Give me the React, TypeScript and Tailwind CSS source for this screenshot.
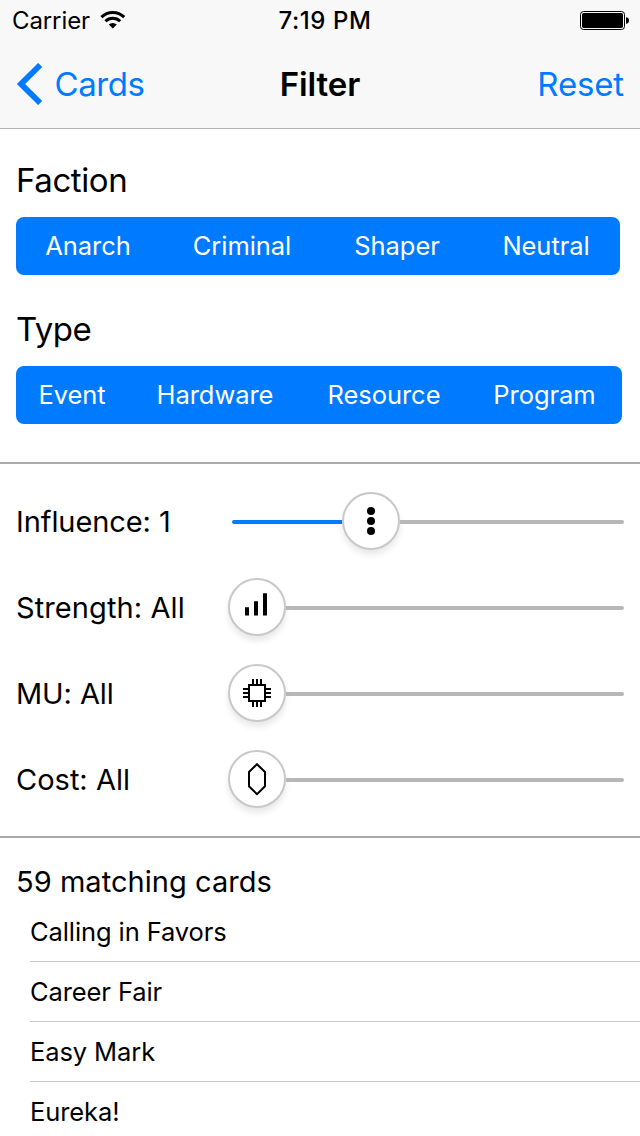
import React from "react";

type IconName = "influence" | "strength" | "memory" | "cost";

function ThumbIcon({ name }: { name: IconName }) {
  return (
    <svg width="54" height="54" viewBox="2 2 54 54" fill="none" className="block shrink-0">
      {name === "influence" && (
        <g fill="#000">
          <circle cx="29" cy="19" r="4" />
          <circle cx="29" cy="29" r="4" />
          <circle cx="29" cy="39" r="4" />
        </g>
      )}
      {name === "strength" && <path d="M17 29.3h4v8.3h-4zM26 23.3h4v14.3h-4zM35 15.3h4v22.3h-4z" fill="#000" />}
      {name === "memory" && (
        <path
          d="M21 21h16v16H21zM25 20v-5M29 20v-5M33 20v-5M25 38v5M29 38v5M33 38v5M20 25h-5M20 29h-5M20 33h-5M38 25h5M38 29h5M38 33h5"
          stroke="#000"
          strokeWidth="2"
        />
      )}
      {name === "cost" && <path d="M29 14.2l8 7.8v14.3l-8 7.9-8-7.9V22z" stroke="#000" strokeWidth="2" />}
    </svg>
  );
}

const factions = [
  { name: "Anarch", cell: "w-[144px]" },
  { name: "Criminal", cell: "w-[164px]" },
  { name: "Shaper", cell: "w-[146px]" },
  { name: "Neutral", cell: "w-[150px] pl-0.5" },
];

const types = [
  { name: "Event", cell: "w-[112px]" },
  { name: "Hardware", cell: "w-[174px]" },
  { name: "Resource", cell: "w-[164px]" },
  { name: "Program", cell: "w-[156px] pl-px" },
];

function Segments({ items }: { items: { name: string; cell: string }[] }) {
  return (
    <div className="flex h-[58px] w-fit overflow-hidden rounded-lg bg-[#007aff] text-[25.5px] tracking-[-0.05px] text-white">
      {items.map((item) => (
        <button key={item.name} className={`flex items-center justify-center ${item.cell}`}>
          {item.name}
        </button>
      ))}
    </div>
  );
}

const sliders: { label: string; icon: IconName; fill: string; tracking: string }[] = [
  { label: "Influence: 1", icon: "influence", fill: "w-[110px]", tracking: "tracking-[-0.08px]" },
  { label: "Strength: All", icon: "strength", fill: "w-0", tracking: "tracking-[0.1px]" },
  { label: "MU: All", icon: "memory", fill: "w-0", tracking: "tracking-[-0.1px]" },
  { label: "Cost: All", icon: "cost", fill: "w-0", tracking: "tracking-normal" },
];

const cards = ["Calling in Favors", "Career Fair", "Easy Mark", "Eureka!"];

export default function App() {
  return (
    <div className="flex h-[1136px] w-[640px] flex-col overflow-hidden bg-white font-['Inter','Liberation_Sans',sans-serif] text-black">
      <header className="h-[129px] shrink-0 border-b border-[#b2b2b2] bg-[#f8f8f8]">
        <div className="grid h-10 grid-cols-3 items-center pt-px text-[24px] leading-10">
          <div className="flex items-center pl-3">
            <span className="tracking-[-0.1px]">Carrier</span>
            <svg width="26" height="20" viewBox="0 0 26 20" className="mb-0.5 ml-[10px] block" fill="none" stroke="#000" strokeWidth="3">
              <path d="M1.4 7.1a16.2 16.2 0 0 1 22.8 0" />
              <path d="M5.4 11.2a10.5 10.5 0 0 1 14.8 0" />
              <path d="M12.8 18.6l-4-4.1a5.9 5.9 0 0 1 8 0z" fill="#000" stroke="none" />
            </svg>
          </div>
          <div className="pl-[10px] text-center font-medium tracking-[0.6px]">7:19 PM</div>
          <div className="flex justify-end pb-0.5 pr-[11px]">
            <svg width="50" height="20" viewBox="0 0 50 20" className="block">
              <rect x="1.5" y="1.5" width="44" height="18" rx="3" fill="none" stroke="#000" />
              <rect x="3" y="3" width="41" height="15" rx="1.8" />
              <path d="M47 7.2c4 0 4 6.6 0 6.6z" />
            </svg>
          </div>
        </div>
        <nav className="grid h-[88px] grid-cols-3 items-center pt-0.5 text-[33px]">
          <button className="flex items-center pl-4 text-[#007aff]">
            <svg width="27" height="42" viewBox="0 0 27 42" fill="none" stroke="#007aff" strokeWidth="5.8" className="mb-0.5 block shrink-0">
              <path d="M24.2 2L5 21l19.2 19" />
            </svg>
            <span className="ml-[11.5px] tracking-[-0.4px]">Cards</span>
          </button>
          <h1 className="text-center font-semibold tracking-[-0.1px]">Filter</h1>
          <button className="pr-4 text-right tracking-[-0.15px] text-[#007aff]">Reset</button>
        </nav>
      </header>

      <section className="h-[335px] shrink-0 border-b-2 border-[#a9a9a9] pl-4 pt-[31px]">
        <h2 className="mb-[17px] text-[33px] leading-[40px] tracking-[-0.4px]">Faction</h2>
        <Segments items={factions} />
        <h2 className="mb-[17px] mt-[34px] text-[33px] leading-[40px] tracking-[-0.5px]">Type</h2>
        <Segments items={types} />
      </section>

      <section className="flex h-[374px] shrink-0 flex-col gap-7 border-b-2 border-[#a9a9a9] pt-7">
        {sliders.map((s) => (
          <div key={s.label} className="flex h-[58px] items-center pl-4 pr-4">
            <span className={`w-[212px] shrink-0 pt-px text-[29px] ${s.tracking}`}>{s.label}</span>
            <div className="flex grow items-center">
              {s.fill !== "w-0" && <div className={`ml-1 mt-0.5 h-1 rounded-l-full bg-[#007aff] ${s.fill}`} />}
              <div className="flex size-[58px] shrink-0 items-center justify-center rounded-full border-2 border-[#c8c8c8] bg-white shadow-[0_5px_6px_rgba(0,0,0,0.09)]">
                <ThumbIcon name={s.icon} />
              </div>
              <div className="mt-0.5 h-1 grow rounded-r-full bg-[#b7b7b7]" />
            </div>
          </div>
        ))}
      </section>

      <section className="grow">
        <h2 className="h-16 pl-4 pt-[24px] text-[29px] leading-[40px] tracking-[0.05px]">59 matching cards</h2>
        <ul className="pl-[30px] text-[25.5px] tracking-[-0.1px]">
          {cards.map((card) => (
            <li key={card} className="flex h-[60px] items-center border-b border-[#c8c7cc] pt-px">
              {card}
            </li>
          ))}
        </ul>
      </section>
    </div>
  );
}
